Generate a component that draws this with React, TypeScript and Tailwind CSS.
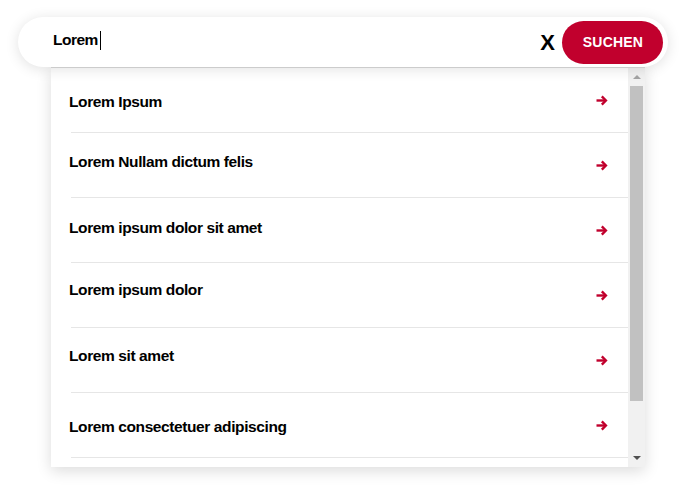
import React from "react";

const items = [
  { label: "Lorem Ipsum", pt: "pt-[25px]" },
  { label: "Lorem Nullam dictum felis", pt: "pt-[20px]" },
  { label: "Lorem ipsum dolor sit amet", pt: "pt-[21px]" },
  { label: "Lorem ipsum dolor", pt: "pt-[18px]" },
  { label: "Lorem sit amet", pt: "pt-[19px]" },
  { label: "Lorem consectetuer adipiscing", pt: "pt-[25px]" },
];

function Arrow() {
  return (
    <svg width="12" height="11" viewBox="0 0 12 11" className="shrink-0">
      <path d="M0.5 5.5H9.5" stroke="#c1002d" strokeWidth="2.4" />
      <path d="M5.8 1.4L9.9 5.5L5.8 9.6" stroke="#c1002d" strokeWidth="2.4" fill="none" />
    </svg>
  );
}

export default function App() {
  return (
    <div className="w-[681px] h-[497px] bg-white overflow-hidden pt-[17px] pl-[18px]" style={{ fontFamily: '"Liberation Sans", Arial, sans-serif' }}>
      <div className="w-[650px]">
        <div className="h-[50px] rounded-full bg-white shadow-[0_2px_14px_rgba(0,0,0,0.12)] flex items-center pl-[35px] pr-[5px] relative z-10">
          <div className="flex items-center flex-1 mb-[4px]">
            <span className="text-[15.5px] font-bold text-black tracking-[-0.5px]">Lorem</span>
            <span className="ml-[2px] w-px h-[19px] bg-black" />
          </div>
          <span className="text-[22px] font-bold text-black mr-[7px] leading-none mt-[2px]">X</span>
          <button className="h-[43px] w-[101px] rounded-full bg-[#c1002d] text-white text-[14px] font-bold tracking-[0.2px] flex items-center justify-center pl-[1px]">
            SUCHEN
          </button>
        </div>
        <div className="ml-[33px] w-[594px] h-[400px] bg-white border-t border-[#dcdcdc] shadow-[0_4px_14px_rgba(0,0,0,0.14)] flex relative z-0">
          <div className="flex-1 flex flex-col">
            {items.map((it) => (
              <div key={it.label} className="h-[65px] shrink-0 flex flex-col">
                <div className="flex-1 flex items-start pl-[18px] pr-[20px]">
                  <span className={`flex-1 ${it.pt} text-[15.5px] font-bold text-black tracking-[-0.4px] leading-[18px]`}>{it.label}</span>
                  <div className="pt-[27px]"><Arrow /></div>
                </div>
                <div className="ml-[20px] h-px bg-[#e6e6e6]" />
              </div>
            ))}
          </div>
          <div className="w-[17px] bg-[#f1f1f1] flex flex-col items-center">
            <div className="h-[18px] flex items-center justify-center">
              <div className="w-0 h-0 border-l-[4px] border-r-[4px] border-b-[4px] border-l-transparent border-r-transparent border-b-[#a3a3a3]" />
            </div>
            <div className="w-[13px] h-[315px] bg-[#c1c1c1]" />
            <div className="flex-1" />
            <div className="h-[18px] flex items-center justify-center">
              <div className="w-0 h-0 border-l-[4px] border-r-[4px] border-t-[4px] border-l-transparent border-r-transparent border-t-[#505050]" />
            </div>
          </div>
        </div>
      </div>
    </div>
  );
}
